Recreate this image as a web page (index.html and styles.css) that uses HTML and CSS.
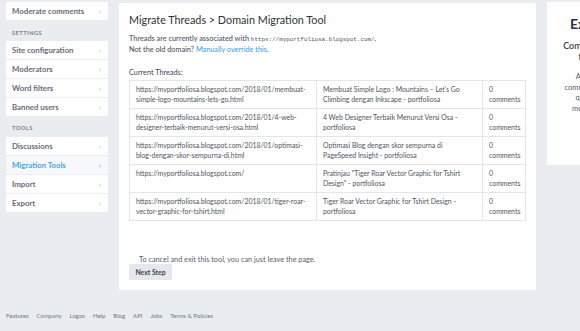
FILE: index.html
```html
<!DOCTYPE html>
<html>
<head>
<meta charset="utf-8">
<link rel="stylesheet" href="styles.css">
</head>
<body>
<div class="page">
  <aside class="sidebar">
    <a class="nav-item">Moderate comments<span class="chev">›</span></a>
    <div class="nav-label">Settings</div>
    <a class="nav-item">Site configuration<span class="chev">›</span></a>
    <a class="nav-item">Moderators<span class="chev">›</span></a>
    <a class="nav-item">Word filters<span class="chev">›</span></a>
    <a class="nav-item">Banned users<span class="chev">›</span></a>
    <div class="nav-label nav-label-tools">Tools</div>
    <a class="nav-item">Discussions<span class="chev">›</span></a>
    <a class="nav-item active">Migration Tools<span class="chev">›</span></a>
    <a class="nav-item">Import<span class="chev">›</span></a>
    <a class="nav-item">Export<span class="chev">›</span></a>
  </aside>
  <main class="card">
    <h1 class="title">Migrate Threads &gt; Domain Migration Tool</h1>
    <p class="info"><strong>Threads are currently associated with</strong> <code>https://myportfoliosa.blogspot.com/</code>.<br>Not the old domain? <a class="link">Manually override this.</a></p>
    <div class="label">Current Threads:</div>
    <table class="threads">
      <tr><td class="c-url">https://myportfoliosa.blogspot.com/2018/01/membuat-simple-logo-mountains-lets-go.html</td><td class="c-title">Membuat Simple Logo : Mountains – Let's Go Climbing dengan Inkscape - portfoliosa</td><td class="c-com">0 comments</td></tr>
      <tr><td class="c-url">https://myportfoliosa.blogspot.com/2018/01/4-web-designer-terbaik-menurut-versi-osa.html</td><td class="c-title">4 Web Designer Terbaik Menurut Versi Osa - portfoliosa</td><td class="c-com">0 comments</td></tr>
      <tr><td class="c-url">https://myportfoliosa.blogspot.com/2018/01/optimasi-blog-dengan-skor-sempurna-di.html</td><td class="c-title">Optimasi Blog dengan skor sempurna di PageSpeed Insight - portfoliosa</td><td class="c-com">0 comments</td></tr>
      <tr><td class="c-url">https://myportfoliosa.blogspot.com/</td><td class="c-title">Pratinjau "Tiger Roar Vector Graphic for Tshirt Design" - portfoliosa</td><td class="c-com">0 comments</td></tr>
      <tr><td class="c-url">https://myportfoliosa.blogspot.com/2018/01/tiger-roar-vector-graphic-for-tshirt.html</td><td class="c-title">Tiger Roar Vector Graphic for Tshirt Design - portfoliosa</td><td class="c-com">0 comments</td></tr>
    </table>
    <p class="cancel">To cancel and exit this tool, you can just leave the page.</p>
    <button class="btn">Next Step</button>
  </main>
  <aside class="side-card">
    <div class="side-title">Examples of use</div>
    <div class="side-sub">Common website migrations<br>for growing websites</div>
    <div class="side-text">As your site grows, threads<br>comments may need to move to a<br>quite different new domain<br>more than once during its life</div>
  </aside>
</div>
<footer class="footer">
  <a>Features</a><a>Company</a><a>Logos</a><a>Help</a><a>Blog</a><a>API</a><a>Jobs</a><a>Terms &amp; Policies</a>
</footer>
</body>
</html>
```
FILE: styles.css
```css
* { box-sizing: border-box; }
html, body { margin: 0; padding: 0; }
body {
  background: #e9ecf1;
  font-family: Lato, "Open Sans", sans-serif;
  color: #4a5159;
  width: 580px;
  height: 331px;
  overflow: hidden;
}
.page {
  display: flex;
  align-items: flex-start;
  padding-top: 2px;
  width: 580px;
  overflow: hidden;
}
.sidebar {
  flex: none;
  width: 102px;
  margin-left: 6px;
  display: flex;
  flex-direction: column;
}
.nav-item {
  display: flex;
  align-items: center;
  justify-content: space-between;
  height: 18px;
  margin-bottom: 1px;
  background: #fff;
  padding: 0 7px 0 6px;
  font-size: 7.8px;
  font-weight: 700;
  color: #656d78;
  border-radius: 1px;
  white-space: nowrap;
}
.nav-item.active { color: #4a9ff0; background: #f6f8fc; }
.chev { color: #b3b8bf; font-size: 8px; font-weight: 400; }
.nav-item.active .chev { color: #4a9ff0; }
.nav-label {
  height: 20px;
  line-height: 24px;
  padding-left: 6px;
  font-size: 5.6px;
  font-weight: 700;
  letter-spacing: 0.5px;
  text-transform: uppercase;
  color: #7a818a;
}
.nav-label-tools { height: 20px; line-height: 21px; }
.card {
  flex: none;
  width: 417px;
  margin-left: 11px;
  margin-top: 1px;
  background: #fff;
  padding: 10px;
  height: 287px;
  border-radius: 1px;
}
.title {
  margin: 0;
  font-size: 10.8px;
  font-weight: 400;
  color: #2d3238;
  line-height: 13px;
}
.info {
  margin: 8px 0 0 0;
  font-size: 7.3px;
  line-height: 10px;
  color: #3f4650;
}
.info strong { color: #5b6470; font-weight: 600; }
.info code {
  font-family: "Liberation Mono", "DejaVu Sans Mono", monospace;
  font-size: 5.9px;
  color: #555;
}
.link { color: #2e9cf5; }
.label {
  margin-top: 13px;
  font-size: 7.3px;
  line-height: 10px;
  color: #3f4650;
}
.threads {
  margin-top: 2px;
  width: 397px;
  border-collapse: collapse;
  font-size: 6.9px;
  line-height: 9.5px;
  color: #4e5661;
}
.threads td {
  border: 1px solid #e4e6ea;
  padding: 4px 6px;
  vertical-align: top;
  height: 28px;
}
.c-url { width: 187px; }
.c-title { width: 167px; }
.c-com { width: 43px; padding-right: 3px !important; }
.cancel {
  margin: 34px 0 0 10px;
  font-size: 7.3px;
  line-height: 10px;
  color: #57606b;
}
.btn {
  margin-top: -1px;
  display: block;
  width: 43px;
  height: 16px;
  padding: 0;
  border: 0;
  border-radius: 1px;
  background: #e5e7ef;
  font-family: Lato, "Open Sans", sans-serif;
  font-size: 6.8px;
  font-weight: 700;
  color: #3c434c;
}
.side-card {
  flex: none;
  width: 146px;
  height: 163px;
  margin-left: 11px;
  background: #fff;
  text-align: center;
  padding-top: 14px;
  white-space: nowrap;
}
.side-title {
  font-size: 14px;
  font-weight: 700;
  color: #2d3238;
  line-height: 16px;
}
.side-sub {
  margin-top: 8px;
  font-size: 9px;
  font-weight: 600;
  line-height: 11px;
  color: #3a4048;
}
.side-text {
  margin-top: 10px;
  font-size: 7.5px;
  line-height: 10.6px;
  color: #555c66;
}
.footer {
  display: flex;
  gap: 8px;
  margin: 22px 0 0 6px;
  font-size: 6px;
  color: #6e7782;
}
```
